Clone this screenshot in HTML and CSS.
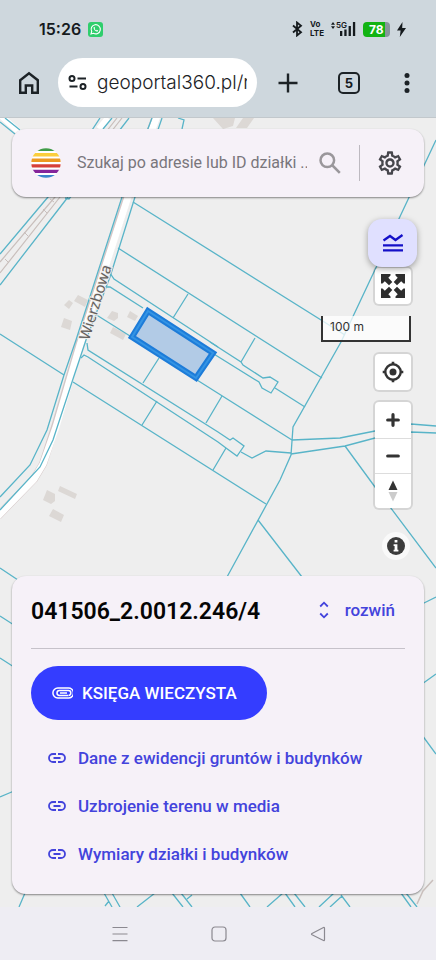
FILE: index.html
```html
<!DOCTYPE html>
<html lang="pl">
<head>
<meta charset="utf-8">
<meta name="viewport" content="width=device-width, initial-scale=1">
<title>geoportal360.pl</title>
<link rel="stylesheet" href="styles.css">
</head>
<body>
<header class="chrome">
  <div class="status">
    <span class="clock">15:26</span>
    <svg class="whatsapp" width="15" height="15" viewBox="0 0 15 15"><rect width="15" height="15" rx="3" fill="#2fce6c"/><path d="M3 12l.7-2.5A4.6 4.6 0 1 1 5.500 11.300z" fill="none" stroke="#fff" stroke-width="1.100"/><path d="M5.600 5.200c-.3 2.200 2 4.600 4.200 4.300l.3-1.100-1.300-.6-.6.6c-.8-.3-1.300-.9-1.600-1.600l.5-.6-.5-1.200z" fill="#fff"/></svg>
    <div class="indicators">
      <svg width="11" height="16" viewBox="0 0 11 16" fill="none" stroke="#151a1d" stroke-width="1.800"><path d="M1 4.500l8 6.800-4 3.200V1.500l4 3.200L1 11.500"/></svg>
      <span class="volte"><span>Vo</span><span>LTE</span></span>
      <span class="signal">
        <svg width="25" height="16" viewBox="0 0 25 16" fill="#151a1d"><path d="M0 3.800L2 1l2 2.800zM0 5.200h4L2 8z"/><rect x="9" y="10" width="2.300" height="5"/><rect x="13.300" y="8.500" width="2.300" height="6.500"/><rect x="17.600" y="5" width="2.300" height="10"/><rect x="21.900" y="1" width="2.300" height="14"/></svg>
        <span class="net">5G</span>
      </span>
      <span class="battery">78</span>
      <svg width="9" height="15" viewBox="0 0 9 15" fill="#151a1d"><path d="M5.500 0L0 8.500h3.600L2.800 15 9 6H5.200z"/></svg>
    </div>
  </div>
  <div class="toolbar">
    <button class="tool" aria-label="Strona główna"><svg width="22" height="24" viewBox="0 0 22 24" fill="none" stroke="#1c2226" stroke-width="2.400"><path d="M2.200 9.200L11 2.300l8.800 6.900v12.500h-5.600v-7.200H7.800v7.200H2.200z"/></svg></button>
    <div class="address">
      <svg width="20" height="18" viewBox="0 0 20 18" fill="none" stroke="#1c2226" stroke-width="2"><circle cx="4" cy="4.500" r="2.500"/><path d="M9.500 4.500H18M1.500 12.500h8"/><circle cx="15" cy="12.500" r="2.500"/></svg>
      <input class="url" type="text" aria-label="Adres" value="geoportal360.pl/r">
    </div>
    <button class="tool plus" aria-label="Nowa karta"><svg width="20" height="20" viewBox="0 0 20 20" stroke="#1c2226" stroke-width="2.400"><path d="M10 .5v19M.5 10h19"/></svg></button>
    <button class="tool tabs" aria-label="Karty">5</button>
    <button class="tool" aria-label="Menu"><svg width="6" height="22" viewBox="0 0 6 22" fill="#1c2226"><circle cx="3" cy="3.500" r="2.500"/><circle cx="3" cy="11" r="2.500"/><circle cx="3" cy="18.500" r="2.500"/></svg></button>
  </div>
</header>

<main class="map">
  <svg class="canvas" viewBox="0 118 436 789" preserveAspectRatio="xMidYMin slice" aria-hidden="true">
    <g fill="#dcd8d5">
      <path d="M78 295l10 5-3 7-11-6zM69 300l4 3-4 6-5-4zM64 318l8 3-2 9-9-3zM112 311l6 2v5l-4 3-7-3zM130 311l8 5-3 5-8-4zM113 327l13 7-3 6-13-7z"/>
      <path d="M60 486l17 8-2 5-17-8zM47 490l8 4v7l-4 3-8-4zM53 509l11 6-3 7-12-6z"/>
      <path d="M213 118h22l-2 8-10 3zM243 118h11l-7 10h-11z"/>
    </g>
    <g fill="none" stroke="#c9bfbc">
      <path d="M117 118L55 197 0 262M122 118L60 197 0 273" stroke-width="1.200"/>
      <path d="M54 202l-4-3M47 213l-4-4M28 236l-4-4M9 263l-4-4"/>
      <path d="M433 880l-10 11-6 13" stroke-width="1.500"/>
    </g>
    <g fill="none" stroke-linejoin="round">
      <path d="M-2 113L20 133M108 118l-9 11" stroke="#fff" stroke-width="6"/>
      <path d="M156 116L127 197 79 345 55 427 43 464 34 479 -2 516" stroke="#d4c7c7" stroke-width="8"/>
      <path d="M157 116L128 197 80 345 56 427 43 464 34 479 -2 516" stroke="#fff" stroke-width="7"/>
    </g>
    <g class="parcels">
      <path d="M5 118l15 12M0 122l15 12"/>
      <path d="M100 118L48 197 0 254M112 118l-9 11M129 118L68 197 0 285M65 198l4 1 3-4"/>
      <path d="M152 118L122 197 76 340 64 375 47 430 30 465 0 497"/>
      <path d="M162 118L135 197 110 277 86 340 73 379 53 440 40 467 0 510"/>
      <path d="M178 118l6 2-2 9"/>
      <path d="M133 202L345 335M118 248L322 378M188 294l-15 24"/>
      <path d="M110 273l4 6 104 68M105 287h5L143 308"/>
      <path d="M210 342l31 20 2 3 20 13 7-1 8 5-7 11-9-5-3-6-50-31M275 388l30 19M255 338l-14 24"/>
      <path d="M95 314l35 22M197 380L292 440"/>
      <path d="M87 343l1 7L218 432l12 8 3-2 11 8-7 10-11-8-8-6L88 357l-4-2-3 3"/>
      <path d="M159 358l-16 25M157 401l-15 24M222 396l-16 27M226 448l-13 22"/>
      <path d="M0 334l64 41M73 382L266 504M258 520l44 57"/>
      <path d="M436 140L341 342 293 427 291 455 280 480 227 577"/>
      <path d="M241 452l11 6 14-7 25 2M291 454l54-8 30-8 36-6 25 1M292 440l48-2 35-7 36-7 25 2M345 446l30 41 61 81"/>
      <path d="M0 568l18 12M0 616l14 9M0 658l14 9M422 604l14-7M422 684l14-10M422 735l14 19M0 797l14-6"/>
      <path d="M25 893l-6 14M104 893l8 14M109 901l-4 5M112 893l8 14M155 893l-18 14M172 893l11 14M181 893l11 14M187 899l5-4M240 893l10 14M283 893l-16 14M285 893l10 14M294 893l11 14M334 893l-15 14M342 896l-12 11M341 895l9 12M401 893l10 14M406 893l11 14"/>
    </g>
    <path d="M148 311L213 353 196 378 132 337z" fill="#b2cbe6" stroke="#1d7cd9" stroke-width="6"/>
    <path d="M148 311L213 353 196 378 132 337z" fill="none" stroke="#3494e4" stroke-width="2"/>
    <text class="street" transform="translate(89 341) rotate(-73)">Wierzbowa</text>
  </svg>

  <form class="search card" role="search">
    <svg width="30" height="30" viewBox="0 0 30 30"><clipPath id="disc"><circle cx="15" cy="15" r="14.700"/></clipPath><g clip-path="url(#disc)"><path fill="#fff" d="M0 0h30v30H0z"/><path fill="#419b49" d="M0 0h30v3H0z"/><path fill="#fbce3c" d="M0 5h30v3.500H0z"/><path fill="#ec9a21" d="M0 10.500h30V14H0z"/><path fill="#d6403a" d="M0 16.300h30v3.300H0z"/><path fill="#84259b" d="M0 21.700h30V25H0z"/><path fill="#3b86cb" d="M0 27h30v3H0z"/></g></svg>
    <input class="query" type="text" aria-label="Szukaj" placeholder="Szukaj po adresie lub ID działki ..">
    <button class="plain" type="button" aria-label="Szukaj"><svg width="22" height="22" viewBox="0 0 22 22" fill="none" stroke="#9a979b" stroke-width="2.500"><circle cx="8.300" cy="8.300" r="6.800"/><path d="M13 13l7.800 7.800"/></svg></button>
    <span class="rule"></span>
    <button class="plain" type="button" aria-label="Ustawienia"><svg width="28" height="28" viewBox="0 0 24 24" fill="#46464c"><path d="M19.430 12.980c.04-.32.07-.64.07-.98s-.03-.66-.07-.98l2.110-1.650c.19-.15.24-.42.12-.64l-2-3.460c-.09-.16-.26-.25-.44-.25-.06 0-.12.01-.17.030l-2.490 1c-.52-.4-1.080-.73-1.690-.98l-.38-2.650C14.460 2.180 14.250 2 14 2h-4c-.25 0-.46.18-.49.42l-.38 2.650c-.61.25-1.170.59-1.690.98l-2.490-1c-.06-.02-.12-.03-.18-.03-.17 0-.34.09-.43.25l-2 3.460c-.13.22-.07.49.12.64l2.110 1.650c-.04.32-.07.65-.07.98s.03.66.07.98l-2.110 1.650c-.19.15-.24.42-.12.64l2 3.460c.09.16.26.25.44.25.06 0 .12-.01.17-.03l2.490-1c.52.4 1.080.73 1.690.98l.38 2.650c.03.24.24.42.49.42h4c.25 0 .46-.18.49-.42l.38-2.650c.61-.25 1.170-.59 1.690-.98l2.490 1c.06.02.12.03.18.03.17 0 .34-.09.43-.25l2-3.460c.12-.22.07-.49-.12-.64l-2.110-1.650zm-1.980-1.710c.04.31.05.52.05.73s-.02.43-.05.73l-.14 1.130.89.7 1.080.84-.7 1.210-1.270-.51-1.040-.42-.9.68c-.43.32-.84.56-1.250.73l-1.060.43-.16 1.130-.2 1.350h-1.400l-.19-1.350-.16-1.130-1.060-.43c-.43-.18-.83-.41-1.230-.71l-.91-.7-1.060.43-1.270.51-.7-1.210 1.080-.84.89-.7-.14-1.130c-.03-.31-.05-.54-.05-.74s.02-.43.05-.73l.14-1.130-.89-.7-1.080-.84.7-1.210 1.270.51 1.040.42.9-.68c.43-.32.84-.56 1.250-.73l1.060-.43.16-1.130.2-1.350h1.390l.19 1.350.16 1.130 1.060.43c.43.18.83.41 1.230.71l.91.7 1.060-.43 1.270-.51.7 1.210-1.070.85-.89.7.14 1.130zM12 8c-2.210 0-4 1.790-4 4s1.790 4 4 4 4-1.790 4-4-1.790-4-4-4zm0 6c-1.100 0-2-.9-2-2s.9-2 2-2 2 .9 2 2-.9 2-2 2z"/></svg></button>
  </form>

  <div class="controls">
    <button class="fab" aria-label="Warstwy"><svg width="22" height="20" viewBox="0 0 22 20" fill="none" stroke="#1410c8" stroke-width="2.300"><path d="M1.500 7.500L8 3l5.500 4L20.500 2M1 12.300h20M1 17.300h20"/></svg></button>
    <button class="ctl" aria-label="Pełny ekran"><svg width="24" height="24" viewBox="0 0 24 24" fill="#2e2e2e"><path id="corner" d="M0 0h9.500v1.500L7.300 3.800l4 4.200-3.300 3.300-4.200-4L1.500 9.500H0z"/><use href="#corner" transform="rotate(90 12 12)"/><use href="#corner" transform="rotate(180 12 12)"/><use href="#corner" transform="rotate(270 12 12)"/></svg></button>
    <div class="scale">100 m</div>
    <button class="ctl" aria-label="Moja lokalizacja"><svg width="22" height="22" viewBox="0 0 22 22" fill="none" stroke="#333"><circle cx="11" cy="11" r="7.700" stroke-width="2.400"/><circle cx="11" cy="11" r="3.500" fill="#333" stroke="none"/><path stroke-width="2.600" d="M11 .7v3M11 18.300v3M.7 11h3M18.300 11h3"/></svg></button>
    <div class="group">
      <button aria-label="Przybliż"><svg width="14" height="14" viewBox="0 0 14 14" stroke="#333" stroke-width="3.200" stroke-linecap="round"><path d="M7 1.700v10.600M1.700 7h10.600"/></svg></button>
      <button aria-label="Oddal"><svg width="14" height="14" viewBox="0 0 14 14" stroke="#333" stroke-width="3.200" stroke-linecap="round"><path d="M1.700 7h10.600"/></svg></button>
      <button aria-label="Północ"><svg width="10" height="22" viewBox="0 0 10 22"><path d="M5 .5L9.500 10h-9z" fill="#333"/><path d="M5 21.500L9.500 12h-9z" fill="#ccc"/></svg></button>
    </div>
    <button class="info" aria-label="Informacje"><svg width="18" height="18" viewBox="0 0 18 18"><circle cx="9" cy="9" r="9" fill="#3c3c3c"/><path d="M7.600 3h2.800v2.600H7.600zM6.600 7.200h3.800v5.600h1v1.700H6.600v-1.700h1V8.900h-1z" fill="#fff"/></svg></button>
  </div>

  <section class="panel card">
    <div class="head">
      <h1>041506_2.0012.246/4</h1>
      <button class="expand"><svg width="10" height="18" viewBox="0 0 10 18" fill="none" stroke="#4343dc" stroke-width="1.800"><path d="M1.200 5.500L5 1.700l3.800 3.800M1.200 12.500L5 16.300l3.800-3.800"/></svg>rozwiń</button>
    </div>
    <a class="primary" href="#ksiega"><svg width="21" height="12" viewBox="0 0 21 12" fill="none" stroke="#fff" stroke-width="1.500"><path d="M16 8.400H7.400a2.400 2.400 0 0 1 0-4.800h9a2.400 2.400 0 0 1 0 4.800M17 10.900H5.800a4.900 4.900 0 0 1 0-9.800h10.400a4 4 0 0 1 .8 9.800M8 6h7"/></svg>KSIĘGA WIECZYSTA</a>
    <nav class="links">
      <a href="#ewidencja"><svg width="18" height="10" viewBox="0 0 18 10"><use href="#chain"/></svg>Dane z ewidencji gruntów i budynków</a>
      <a href="#media"><svg width="18" height="10" viewBox="0 0 18 10"><use href="#chain"/></svg>Uzbrojenie terenu w media</a>
      <a href="#wymiary"><svg width="18" height="10" viewBox="0 0 18 10"><defs><path id="chain" d="M8 1H5a4 4 0 0 0 0 8h3M10 1h3a4 4 0 0 1 0 8h-3M5.500 5h7" fill="none" stroke="#4343dc" stroke-width="1.800"/></defs><use href="#chain"/></svg>Wymiary działki i budynków</a>
    </nav>
  </section>
</main>

<footer class="sysnav">
  <button aria-label="Ostatnie"><svg width="16" height="16" viewBox="0 0 16 16" stroke="#8b8990" stroke-width="1.200"><path d="M.5 1.500h15M.5 8h15M.5 14.700h15"/></svg></button>
  <button aria-label="Ekran główny"><svg width="16" height="16" viewBox="0 0 16 16" fill="none" stroke="#8b8990" stroke-width="1.200"><rect x="1" y="1" width="14" height="14" rx="3"/></svg></button>
  <button aria-label="Wstecz"><svg width="16" height="16" viewBox="0 0 16 16" fill="none" stroke="#8b8990" stroke-width="1.200" stroke-linejoin="round"><path d="M13.500 1.500L2 7.500q-1 .7 0 1.300l11.500 5.700q1 .3 1-.8V2.300q0-1.200-1-.8z"/></svg></button>
</footer>
</body>
</html>
```
FILE: styles.css
```css
* { box-sizing: border-box; }
body {
  margin: 0;
  min-height: 100vh;
  display: flex;
  flex-direction: column;
  background: #eeedf3;
  font-family: Roboto, "Liberation Sans", sans-serif;
}
button {
  display: flex;
  align-items: center;
  justify-content: center;
  margin: 0;
  padding: 0;
  border: 0;
  background: none;
  font: inherit;
  color: inherit;
}
svg { display: block; flex: none; }
input { min-width: 0; border: 0; padding: 0; background: none; outline: 0; }

/* phone status bar and browser toolbar */
.chrome { background: #ced7dd; color: #151a1d; border-bottom: 1px solid #c2c8cc; }
.status {
  display: flex;
  align-items: center;
  height: 58px;
  padding: 0 30px 0 39px;
  font-family: Inter, sans-serif;
}
.clock { font-size: 16px; font-weight: 600; margin-right: 7px; }
.indicators { display: flex; align-items: center; gap: 7px; margin-left: auto; }
.volte { display: flex; flex-direction: column; font-size: 8px; line-height: 9px; font-weight: 700; }
.signal { position: relative; }
.net { position: absolute; left: 5px; top: 0; font-size: 8px; line-height: 8px; font-weight: 600; }
.battery {
  width: 27px;
  border-radius: 4px;
  background: linear-gradient(90deg, #12b312 80%, #87949a 80%);
  color: #fff;
  font-size: 12px;
  line-height: 15px;
  font-weight: 700;
  padding-left: 6px;
}
.toolbar { display: flex; align-items: center; height: 59px; padding: 0 26px 10px 18px; }
.address {
  display: flex;
  align-items: center;
  gap: 9px;
  flex: 1;
  min-width: 0;
  height: 49px;
  margin: 0 21px 0 18px;
  padding: 0 10px 0 10px;
  border-radius: 25px;
  background: #fff;
}
.url { flex: 1; font: 19px/28px Inter, sans-serif; font-weight: 300; color: #1c2226; }
.plus { margin-right: 40px; }
.tabs {
  width: 22px;
  height: 22px;
  margin-right: 44px;
  border: 2px solid #1c2226;
  border-radius: 5px;
  font: 700 13px/18px Inter, sans-serif;
}

/* map */
.map {
  position: relative;
  flex: 1;
  display: flex;
  flex-direction: column;
  padding: 11px 12px 13px;
  background: #eeeeee;
}
.canvas { position: absolute; left: 0; top: 0; width: 100%; height: 100%; }
.parcels { fill: none; stroke: #58b4c8; stroke-width: 1.3px; }
.street {
  font: 15px "Noto Sans", sans-serif;
  fill: #65605c;
  stroke: #eeeeee;
  stroke-width: 2px;
  paint-order: stroke;
}
.card {
  position: relative;
  background: #f6f1f8;
  border-radius: 14px;
  box-shadow: 0 1px 2px rgba(0, 0, 0, .45);
}
.search { display: flex; align-items: center; height: 68px; padding: 0 20px 0 19px; }
.query {
  flex: 1;
  margin: 0 12px 0 16px;
  font: 16px/24px Roboto, sans-serif;
  color: #333;
}
.query::placeholder { color: #79767c; opacity: 1; }
.rule { width: 1px; height: 36px; margin: 0 16px 0 18px; background: #bdb9c0; }

.controls {
  position: relative;
  flex: 1;
  display: flex;
  flex-direction: column;
  align-items: flex-end;
  gap: 12px;
  padding: 22px 7px 16px;
}
.fab {
  width: 49px;
  height: 48px;
  margin-bottom: -11px;
  border-radius: 14px;
  background: #e0e0ff;
  box-shadow: 0 2px 6px rgba(0, 0, 0, .35);
  z-index: 1;
}
.ctl, .group { background: #fff; border-radius: 4px; box-shadow: 0 0 0 2px rgba(0, 0, 0, .1); margin-right: 6px; }
.ctl { width: 36px; height: 36px; }
.group { width: 36px; }
.group button { width: 100%; height: 36px; }
.group button + button { height: 35px; border-top: 1px solid #ddd; }
.scale {
  width: 90px;
  height: 26px;
  margin-right: 6px;
  padding-left: 7px;
  border: 2px solid #333;
  border-top: 0;
  background: rgba(255, 255, 255, .75);
  font: 12px/22px Inter, sans-serif;
  color: #333;
}
.info { width: 28px; height: 28px; margin: 12px 7px 0; border-radius: 14px; background: #f9f9f9; }

/* parcel panel */
.panel { padding: 0 19px 16px; }
.head {
  display: flex;
  align-items: center;
  justify-content: space-between;
  height: 73px;
  padding-right: 10px;
  border-bottom: 1px solid #c6c2ca;
  margin-bottom: 17px;
}
h1 { margin: 0; font-size: 23px; line-height: 32px; font-weight: 600; color: #050505; }
.expand { gap: 16px; font-size: 17px; font-weight: 500; color: #4343dc; padding-bottom: 4px; }
.primary {
  display: inline-flex;
  align-items: center;
  gap: 9px;
  height: 54px;
  padding: 0 30px 0 21px;
  border-radius: 27px;
  background: #343dff;
  color: #fff;
  font-size: 17px;
  font-weight: 500;
  text-decoration: none;
}
.links { display: flex; flex-direction: column; margin-top: 14px; }
.links a {
  display: flex;
  align-items: center;
  gap: 12px;
  height: 48px;
  padding-left: 17px;
  color: #4343dc;
  font-size: 17px;
  font-weight: 500;
  text-decoration: none;
}

/* system navigation */
.sysnav { display: flex; justify-content: center; gap: 83px; height: 53px; padding-left: 2px; }
```
